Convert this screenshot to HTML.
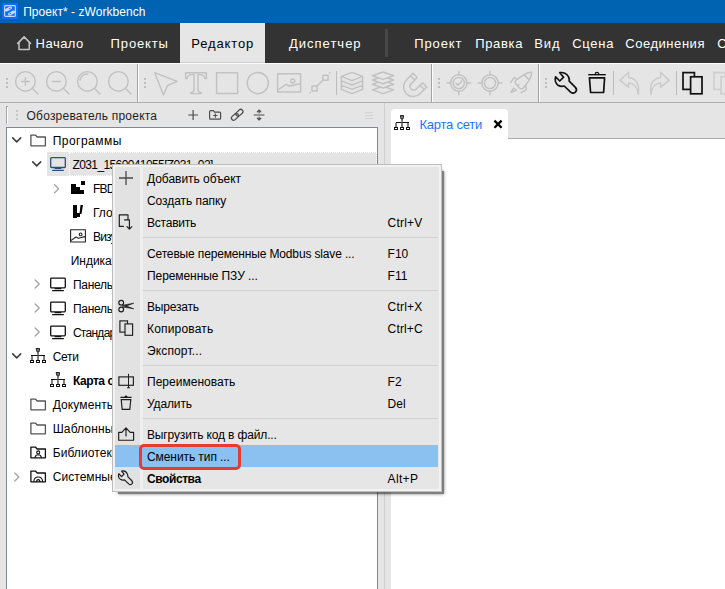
<!DOCTYPE html>
<html><head><meta charset="utf-8">
<style>
*{box-sizing:border-box;margin:0;padding:0}
html,body{width:725px;height:589px;overflow:hidden;background:#e5e5e5;font-family:"Liberation Sans",sans-serif;}
.abs{position:absolute}
.tx{position:absolute;white-space:nowrap}
#title{position:absolute;left:0;top:0;width:725px;height:23px;background:#0063b1}
#menubar{position:absolute;left:0;top:23px;width:725px;height:40px;background:#333}
#acttab{position:absolute;left:180px;top:23px;width:85px;height:40px;background:#e6e6e6;border-bottom:1px solid #cdcdcd}
#toolbar{position:absolute;left:0;top:63px;width:725px;height:40px;background:#e5e5e5;border-top:1px solid #fcfcfc;border-bottom:1px solid #b0b0b0}
#tree{position:absolute;left:6px;top:127px;width:372px;height:480px;background:#fff;border:1px solid #828790}
#ctx{position:absolute;left:112px;top:164px;width:330px;height:328px;background:#e6e6e6;border:1px solid #bdbdbd;box-shadow:inset 0 0 0 2px #f2f2f2}
#ctxshadow{position:absolute;left:118px;top:171px;width:326px;height:323px;background:rgba(0,0,0,0.5);box-shadow:0 0 3px 0 rgba(0,0,0,0.5)}
</style></head><body>
<div id="title"></div>
<svg class="abs" style="left:2px;top:3px" width="16" height="16" viewBox="2 3 16 16"><rect x="2" y="3" width="16" height="16" fill="#0f6cf7"/><rect x="4.600" y="5.600" width="10.800" height="10.800" rx="0.800" fill="none" stroke="#c4d9ff" stroke-width="1.150"/><g fill="#c9dcff"><rect x="4.600" y="7.500" width="7.600" height="3" rx="1.500" transform="rotate(-27 8.400 9)"/><rect x="7.800" y="11.500" width="7.600" height="3" rx="1.500" transform="rotate(-27 11.600 13)"/></g><g fill="#0f6cf7"><ellipse cx="9.800" cy="8.400" rx="1" ry="0.550" transform="rotate(-20 9.800 8.400)"/><ellipse cx="10.200" cy="13.600" rx="1" ry="0.550" transform="rotate(-20 10.200 13.600)"/></g></svg>
<div class="tx" style="left:23.2px;top:3.84px;font-size:12px;line-height:16px;font-weight:400;color:#fff;letter-spacing:0.050px;">Проект* - zWorkbench</div>
<div id="menubar"></div><div id="acttab"></div>
<svg class="abs" style="left:16px;top:35px" width="16" height="16" viewBox="16 35 16 16"><path d="M17.700 43.400L24.100 36.900L30.500 43.400M19 42.600V49.600H29.200V42.600" fill="none" stroke="#c4c4c4" stroke-width="1.500" stroke-linejoin="round" stroke-linecap="round"/></svg>
<div class="tx" style="left:35.6px;top:34.90px;font-size:13px;line-height:17px;font-weight:400;color:#fff;letter-spacing:0.481px;">Начало</div>
<div class="tx" style="left:110.6px;top:34.90px;font-size:13px;line-height:17px;font-weight:400;color:#fff;letter-spacing:0.855px;">Проекты</div>
<div class="tx" style="left:191.2px;top:34.90px;font-size:13px;line-height:17px;font-weight:400;color:#000;letter-spacing:0.876px;">Редактор</div>
<div class="tx" style="left:289.0px;top:34.90px;font-size:13px;line-height:17px;font-weight:400;color:#fff;letter-spacing:1.000px;">Диспетчер</div>
<div class="tx" style="left:414.2px;top:34.90px;font-size:13px;line-height:17px;font-weight:400;color:#fff;letter-spacing:0.894px;">Проект</div>
<div class="tx" style="left:475.2px;top:34.90px;font-size:13px;line-height:17px;font-weight:400;color:#fff;letter-spacing:0.676px;">Правка</div>
<div class="tx" style="left:534.2px;top:34.90px;font-size:13px;line-height:17px;font-weight:400;color:#fff;letter-spacing:1.000px;">Вид</div>
<div class="tx" style="left:572.2px;top:34.90px;font-size:13px;line-height:17px;font-weight:400;color:#fff;letter-spacing:0.743px;">Сцена</div>
<div class="tx" style="left:625.2px;top:34.90px;font-size:13px;line-height:17px;font-weight:400;color:#fff;letter-spacing:0.554px;">Соединения</div>
<div class="tx" style="left:717.2px;top:34.90px;font-size:13px;line-height:17px;font-weight:400;color:#fff;letter-spacing:0.000px;">С</div>
<div class="abs" style="left:385px;top:29px;width:3px;height:28px;background:#474747"></div>
<div id="toolbar"></div>
<svg class="abs" style="left:0;top:63px" width="725" height="40" viewBox="0 63 725 40" fill="none" stroke-linecap="round" stroke-linejoin="round">
<!-- full separators -->
<g shape-rendering="crispEdges" stroke="none">
<rect x="137" y="64" width="1" height="38" fill="#a2a2a2"/><rect x="138" y="63" width="1" height="39" fill="#fdfdfd"/>
<rect x="431" y="64" width="1" height="38" fill="#a2a2a2"/><rect x="432" y="63" width="1" height="39" fill="#fdfdfd"/>
<rect x="538" y="64" width="1" height="38" fill="#a2a2a2"/><rect x="539" y="63" width="1" height="39" fill="#fdfdfd"/>
<!-- grips -->
<g fill="#bdbdbd">
<rect x="6" y="78" width="2" height="2"/><rect x="6" y="82" width="2" height="2"/><rect x="6" y="86" width="2" height="2"/>
<rect x="144" y="78" width="2" height="2"/><rect x="144" y="82" width="2" height="2"/><rect x="144" y="86" width="2" height="2"/>
<rect x="438" y="78" width="2" height="2"/><rect x="438" y="82" width="2" height="2"/><rect x="438" y="86" width="2" height="2"/>
<rect x="545" y="78" width="2" height="2"/><rect x="545" y="82" width="2" height="2"/><rect x="545" y="86" width="2" height="2"/>
</g>
<!-- short separators -->
<rect x="336" y="71" width="1" height="24" fill="#bcbcbc"/>
<rect x="613" y="71" width="1" height="24" fill="#bcbcbc"/>
<rect x="676" y="71" width="1" height="24" fill="#bcbcbc"/>
</g>
<!-- disabled icons -->
<g stroke="#c2c2c2" stroke-width="1.45">
<!-- zoom in -->
<circle cx="25.4" cy="81.4" r="9.8"/><path d="M32.6 88.6L38 94M21.6 81.4H29.2M25.4 77.6V85.2"/>
<!-- zoom out -->
<circle cx="56.4" cy="81.4" r="9.8"/><path d="M63.6 88.6L69 94M52.6 81.4H60.2"/>
<!-- zoom fit -->
<circle cx="87.4" cy="81.4" r="9.8"/><path d="M94.6 88.6L100 94M80 80A7.4 7.4 0 0 1 88 74"/>
<!-- zoom -->
<circle cx="118.4" cy="81.4" r="9.8"/><path d="M125.600 88.6L131 94"/>
<!-- arrow -->
<path d="M154.700 72.600L177.200 81.400L167.600 85.500L163.400 95Z"/>
<!-- T -->
<path d="M185.600 72.800H206.400V78.400H204.800C204.400 76 203.400 74.600 200.600 74.600H198V90C198 91.800 198.800 92.400 201 92.400V93.600H191V92.400C193.200 92.400 194 91.800 194 90V74.600H191.400C188.600 74.600 187.600 76 187.200 78.400H185.600Z"/>
<!-- square -->
<rect x="216.600" y="72.800" width="21" height="20.600"/>
<!-- circle -->
<circle cx="257.800" cy="83.100" r="10.600"/>
<!-- image -->
<rect x="277.600" y="73.800" width="23" height="18.200"/><circle cx="292.700" cy="81" r="2"/><path d="M277.800 90L286.200 84.400L289.400 86L300.400 83.800"/>
<!-- line -->
<rect x="312" y="86" width="5" height="5"/><rect x="323" y="75.200" width="5" height="5"/><path d="M316.800 86.200L323.200 80M310 92.800L310.200 92.600M329.800 73L330 72.800"/>
<!-- stack -->
<path d="M352 72.400L362.600 76.400V89.400L352 93.600L341.400 89.400V76.400ZM341.400 76.400L352 80.600L362.600 76.400M341.400 80.800L352 85L362.600 80.800M341.400 85.200L352 89.400L362.600 85.200"/>
<!-- layers -->
<path fill="#e5e5e5" d="M383 86.2L393.6 89.9L383 93.6L372.4 89.9Z"/><path fill="#e5e5e5" d="M383 80.6L393.6 84.3L383 88.0L372.4 84.3Z"/><path fill="#e5e5e5" d="M383 76.3L393.6 80.0L383 83.7L372.4 80.0Z"/><path fill="#e5e5e5" d="M383 72.0L393.6 75.7L383 79.4L372.4 75.7Z"/>
<!-- magnet -->
<path d="M413 73.200L417.200 77.400L410.800 84A3.700 3.700 0 0 0 416 89.200L422.600 82.800L426.800 87L420 93.800A9.500 9.500 0 0 1 406.400 80ZM410.400 75.800L414.600 80M420.200 85.600L424.200 89.600"/>
<!-- target check -->
<circle cx="458.800" cy="83" r="8.200"/><circle cx="458.800" cy="83" r="5.600"/><path d="M458.800 71.200V74.600M458.800 91.400V94.800M447 83H450.400M467.200 83H470.600M456 83.200L458 85.200L461.800 81"/>
<!-- target -->
<circle cx="490" cy="83" r="8.200"/><circle cx="490" cy="83" r="5.600"/><path d="M490 71.200V74.600M490 91.400V94.800M478.200 83H481.600M498.400 83H501.800"/>
<!-- rocket -->
<path d="M531.700 72.200C528.600 72.400 526 73.200 523.900 74.700L517 79.400C515.400 80.600 514.800 82.200 515.600 83.600L519.600 88C520.800 89.200 522.400 89 523.600 87.800L529.200 80.200C530.800 78 531.600 75.400 531.700 72.200ZM523.900 74.700L529.400 79.900M517.200 79.200L514.100 77.600L510.600 82.600M525.800 85.400L526.200 89.700L521.200 92.700M517.400 86L519 84.400M513.800 88L516.400 90.200L510.900 92.500Z"/>
</g>
<g stroke="#cbcbcb" stroke-width="1.5">
<!-- undo -->
<path d="M628.600 72.200L620 80.400L628.600 87.200V83C634 83.200 637.400 86.800 638.200 94.400C640 84.600 636 78 628.600 77.400Z"/>
<!-- redo -->
<path d="M660.600 72.200L669.200 80.400L660.600 87.200V83C655.200 83.200 651.800 86.800 651 94.400C649.200 84.600 653.200 78 660.600 77.400Z"/>
</g>
<!-- enabled icons -->
<g stroke="#111" stroke-width="1.7">
<!-- wrench -->
<path d="M559.800 72.700C563 72 567 73.500 568.600 77C569.400 78.600 569.400 80 569.200 81.200L575.400 87.400C576.800 89 576.600 91 575.400 92.200C574 93.400 572 93.400 570.600 92.200L564.200 86C562.400 86.600 560 86.400 558 85.200C555.600 83.600 554.600 80 555.600 76.800L559.800 81L563.600 77.200Z"/>
<!-- trash -->
<path d="M588.200 74.700H605.800" stroke-linecap="butt" stroke-width="1.400"/><path d="M595.200 74.200A1.800 1.800 0 0 1 598.800 74.200" stroke-width="1.200"/><path d="M589.400 77.800H604.600L603.600 92.500H590.600Z" stroke-linecap="butt" stroke-width="1.700"/>
<!-- copy -->
<rect x="683" y="72.600" width="11.400" height="16.800" stroke-linejoin="miter"/><rect x="690.600" y="76.800" width="11.400" height="17" stroke-linejoin="miter" fill="#e5e5e5"/>
</g>
<g stroke="#cfcfcf" stroke-width="1.7">
<rect x="714" y="72.600" width="11.400" height="16.800" stroke-linejoin="miter"/><rect x="721" y="76.800" width="11.400" height="17" stroke-linejoin="miter" fill="#e5e5e5"/>
</g>
</svg>

<div class="abs" style="left:6px;top:106px;width:1px;height:18px;background:#a4a4a4"></div><div class="abs" style="left:7px;top:106px;width:1px;height:1px;background:#a4a4a4"></div><div class="abs" style="left:7px;top:107px;width:1px;height:17px;background:#fff"></div>
<svg class="abs" style="left:0;top:104px" width="385" height="23" viewBox="0 104 385 23" fill="none" stroke-linecap="round" stroke-linejoin="round">
<g fill="#c6c6c6" stroke="none" shape-rendering="crispEdges"><rect x="16" y="110" width="2" height="2"/><rect x="16" y="114" width="2" height="2"/><rect x="16" y="118" width="2" height="2"/></g>
<g stroke="#4d4d4d" stroke-width="1.200">
<path d="M188.300 115H198M193.100 110.100V119.900" stroke-linecap="butt"/>
<path d="M210.600 110.700H213.400L214.600 112.200H219.600A1 1 0 0 1 220.600 113.200V118.200A1 1 0 0 1 219.600 119.200H210.600A1 1 0 0 1 209.600 118.200V111.700A1 1 0 0 1 210.600 110.700Z"/><path d="M213.600 115.500H217M215.300 113.800V117.200" stroke-width="1.100"/>
<g transform="rotate(-42 237.200 114.800)"><rect x="236.200" y="112.600" width="8" height="4.400" rx="2.200"/><rect x="230.200" y="112.600" width="8" height="4.400" rx="2.200"/></g>
<path d="M254.200 115H264M259.100 110.200V113M259.100 117V119.800M257.300 111.800L259.100 110L260.900 111.800M257.300 118.200L259.100 120L260.900 118.200" stroke-width="1.150"/>
</g>
<g stroke="#d2d2d2" stroke-width="1" shape-rendering="crispEdges"><path d="M365 112.500H373M365 115.500H373M365 118.500H373"/></g>
</svg>

<div class="tx" style="left:26.5px;top:107.64px;font-size:12px;line-height:16px;font-weight:400;color:#1e1e1e;letter-spacing:0.215px;">Обозреватель проекта</div>
<div id="tree"></div>
<div class="abs" style="left:47px;top:152px;width:22px;height:24px;background:#e4e4e4"></div>
<div class="abs" style="left:69px;top:152px;width:308px;height:24px;background:#e4e4e4;border:1px dotted #fff"></div>
<div class="tx" style="left:52.7px;top:132.84px;font-size:12px;line-height:16px;font-weight:400;color:#000;letter-spacing:0.471px;">Программы</div>
<div class="tx" style="left:72.5px;top:156.84px;font-size:12px;line-height:16px;font-weight:400;color:#000;letter-spacing:-0.609px;">Z031_1560041055[Z031_02]</div>
<div class="tx" style="left:92.9px;top:180.84px;font-size:12px;line-height:16px;font-weight:400;color:#000;letter-spacing:-0.750px;">FBD</div>
<div class="tx" style="left:92.9px;top:204.84px;font-size:12px;line-height:16px;font-weight:400;color:#000;letter-spacing:0.024px;">Глобальные</div>
<div class="tx" style="left:92.9px;top:228.84px;font-size:12px;line-height:16px;font-weight:400;color:#000;letter-spacing:-0.750px;">Визуализация</div>
<div class="tx" style="left:70.8px;top:252.84px;font-size:12px;line-height:16px;font-weight:400;color:#000;letter-spacing:-0.047px;">Индикаторы</div>
<div class="tx" style="left:72.9px;top:276.84px;font-size:12px;line-height:16px;font-weight:400;color:#000;letter-spacing:-0.254px;">Панель</div>
<div class="tx" style="left:72.9px;top:300.84px;font-size:12px;line-height:16px;font-weight:400;color:#000;letter-spacing:-0.254px;">Панель</div>
<div class="tx" style="left:72.9px;top:324.84px;font-size:12px;line-height:16px;font-weight:400;color:#000;letter-spacing:-0.712px;">Стандартные</div>
<div class="tx" style="left:52.7px;top:348.84px;font-size:12px;line-height:16px;font-weight:400;color:#000;letter-spacing:-0.280px;">Сети</div>
<div class="tx" style="left:72.9px;top:372.84px;font-size:12px;line-height:16px;font-weight:700;color:#000;letter-spacing:-0.439px;">Карта сети</div>
<div class="tx" style="left:52.7px;top:396.84px;font-size:12px;line-height:16px;font-weight:400;color:#000;letter-spacing:0.115px;">Документы</div>
<div class="tx" style="left:52.7px;top:420.84px;font-size:12px;line-height:16px;font-weight:400;color:#000;letter-spacing:0.133px;">Шаблонны</div>
<div class="tx" style="left:52.7px;top:444.84px;font-size:12px;line-height:16px;font-weight:400;color:#000;letter-spacing:0.081px;">Библиотеки</div>
<div class="tx" style="left:52.7px;top:468.84px;font-size:12px;line-height:16px;font-weight:400;color:#000;letter-spacing:0.052px;">Системные</div>
<svg class="abs" style="left:7px;top:128px" width="106" height="360" viewBox="7 128 106 360" fill="none" stroke-linecap="round" stroke-linejoin="round">
<defs>
<g id="chevD"><path d="M0.300 0.300L4.300 4.300L8.300 0.300" stroke="#3c3c3c" stroke-width="1.500"/></g>
<g id="chevR"><path d="M0.200 0.200L4.200 4.200L0.200 8.200" stroke="#a6a6a6" stroke-width="1.400"/></g>
<g id="folder"><path d="M0.700 0.700H5.400L7 2.500H15.200V11.300H0.700Z" stroke="#555" stroke-width="1.300"/></g>
<g id="mon"><rect x="0.700" y="0.700" width="14.600" height="9.800" rx="0.800" stroke-width="1.300"/><path d="M5.200 11.300H10.800M2.600 13.300H13.400" stroke-width="1.200"/></g>
<g id="net"><g shape-rendering="crispEdges" stroke="#111" stroke-width="1"><rect x="0.500" y="12.500" width="3" height="2"/><rect x="6.500" y="12.500" width="3" height="2"/><rect x="12.500" y="12.500" width="3" height="2"/><path d="M1.500 7.500H14.500"/></g><g stroke="#555" stroke-width="1.500" stroke-linecap="butt"><path d="M2 8V12M8 3.500V12M14 8V12"/></g><path d="M6.500 0.500H9.500V2.500A1.500 1.500 0 0 1 6.500 2.500Z" stroke="#222" stroke-width="1" fill="#777"/></g>
</defs>
<use href="#chevD" x="12.400" y="137.600"/>
<use href="#folder" x="30.200" y="134.500"/>
<use href="#chevD" x="32.400" y="161.600"/>
<g stroke="#2f4d7c"><use href="#mon" x="50" y="157"/></g>
<use href="#chevR" x="54.400" y="184.600"/>
<!-- FBD -->
<g fill="#000" stroke="none" shape-rendering="crispEdges"><rect x="71" y="184" width="5" height="10"/><rect x="76" y="187" width="4" height="7"/><rect x="80" y="190" width="4" height="4"/><rect x="81" y="181" width="4" height="4"/></g>
<!-- Glob -->
<g fill="#000" stroke="none"><path d="M73 205H77V218H73ZM77 213H80V217H77ZM80.500 205H83L81.500 214H79.500Z"/></g>
<!-- Viz -->
<g stroke="#222" stroke-width="1.100"><rect x="70.600" y="229.800" width="14.800" height="12.200"/><circle cx="80.600" cy="234.400" r="1.400"/><path d="M70.800 240.600L76 237L78.400 238.200L85 236.600"/></g>
<use href="#chevR" x="35" y="279.800"/>
<g stroke="#111"><use href="#mon" x="50" y="277.400"/></g>
<use href="#chevR" x="35" y="303.800"/>
<g stroke="#111"><use href="#mon" x="50" y="301.400"/></g>
<use href="#chevR" x="35" y="327.800"/>
<g stroke="#111"><use href="#mon" x="50" y="325.400"/></g>
<use href="#chevD" x="12.400" y="353.600"/>
<use href="#net" x="30" y="348"/>
<use href="#net" x="50" y="372"/>
<use href="#folder" x="30.200" y="398.500"/>
<use href="#folder" x="30.200" y="422.500"/>
<g><path d="M30.900 447.200H35.600L37.200 449H45.400V457.800H30.900Z" stroke="#111" stroke-width="1.300"/><circle cx="38.200" cy="452.400" r="1.500" stroke="#111" stroke-width="1.100"/><path d="M35 457.600C35.400 455.600 36.600 454.800 38.200 454.800C39.800 454.800 41 455.600 41.400 457.600" stroke="#111" stroke-width="1.100"/></g>
<use href="#chevR" x="14.600" y="472.800"/>
<g><path d="M30.900 471.200H35.600L37.200 473H45.400V481.800H30.900Z" stroke="#111" stroke-width="1.300"/><path d="M33.800 481.600C34 478.400 36 477 38.200 477C40.400 477 42.400 478.400 42.600 481.600M36.400 481.600C36.600 480.200 37.400 479.600 38.200 479.600C39 479.600 39.800 480.200 40 481.600" stroke="#111" stroke-width="1.100"/></g>
</svg>

<div class="abs" style="left:384px;top:103px;width:1px;height:490px;background:#cfcfcf"></div>
<div class="abs" style="left:391px;top:138px;width:340px;height:1px;background:#ababab"></div>
<div class="abs" style="left:391px;top:139px;width:340px;height:460px;background:#fff"></div>
<div class="abs" style="left:391px;top:109px;width:117px;height:31px;background:#fff;border-radius:4px 4px 0 0"></div>
<svg class="abs" style="left:391px;top:109px" width="117" height="31" viewBox="391 109 117 31" fill="none">
<g transform="translate(394 115)"><g shape-rendering="crispEdges" stroke="#111" stroke-width="1"><rect x="0.500" y="12.500" width="3" height="2"/><rect x="6.500" y="12.500" width="3" height="2"/><rect x="12.500" y="12.500" width="3" height="2"/><path d="M1.500 7.500H14.500"/></g><g stroke="#555" stroke-width="1.500"><path d="M2 8V12M8 3.500V12M14 8V12"/></g><path d="M6.500 0.500H9.500V2.500A1.500 1.500 0 0 1 6.500 2.500Z" stroke="#222" stroke-width="1" fill="#777"/></g>
<path d="M494.400 120.600L501.600 127.800M501.600 120.600L494.400 127.800" stroke="#000" stroke-width="2.300"/>
</svg>

<div class="tx" style="left:419.5px;top:116.10px;font-size:13px;line-height:17px;font-weight:400;color:#1c74fb;letter-spacing:-0.236px;">Карта сети</div>
<div id="ctxshadow"></div><div id="ctx"></div>
<div class="abs" style="left:115px;top:167px;width:25px;height:322px;background:#e2e2e2"></div>
<div class="abs" style="left:140px;top:167px;width:3px;height:322px;background:#eeeeee"></div>
<div class="abs" style="left:115px;top:445px;width:323px;height:22px;background:#8bc1f0"></div>
<div class="tx" style="left:147.0px;top:170.84px;font-size:12px;line-height:16px;font-weight:400;color:#000;letter-spacing:-0.034px;">Добавить объект</div>
<div class="tx" style="left:147.0px;top:192.84px;font-size:12px;line-height:16px;font-weight:400;color:#000;letter-spacing:-0.058px;">Создать папку</div>
<div class="tx" style="left:147.0px;top:214.84px;font-size:12px;line-height:16px;font-weight:400;color:#000;letter-spacing:-0.225px;">Вставить</div>
<div class="tx" style="left:387.6px;top:214.84px;font-size:12px;line-height:16px;font-weight:400;color:#000;letter-spacing:0.202px;">Ctrl+V</div>
<div class="tx" style="left:147.0px;top:245.84px;font-size:12px;line-height:16px;font-weight:400;color:#000;letter-spacing:-0.150px;">Сетевые переменные Modbus slave ...</div>
<div class="tx" style="left:387.6px;top:245.84px;font-size:12px;line-height:16px;font-weight:400;color:#000;letter-spacing:0.000px;">F10</div>
<div class="tx" style="left:147.0px;top:267.84px;font-size:12px;line-height:16px;font-weight:400;color:#000;letter-spacing:-0.080px;">Переменные ПЗУ ...</div>
<div class="tx" style="left:387.6px;top:267.84px;font-size:12px;line-height:16px;font-weight:400;color:#000;letter-spacing:0.000px;">F11</div>
<div class="tx" style="left:147.0px;top:298.84px;font-size:12px;line-height:16px;font-weight:400;color:#000;letter-spacing:-0.196px;">Вырезать</div>
<div class="tx" style="left:387.6px;top:298.84px;font-size:12px;line-height:16px;font-weight:400;color:#000;letter-spacing:0.202px;">Ctrl+X</div>
<div class="tx" style="left:147.0px;top:320.84px;font-size:12px;line-height:16px;font-weight:400;color:#000;letter-spacing:0.186px;">Копировать</div>
<div class="tx" style="left:387.6px;top:320.84px;font-size:12px;line-height:16px;font-weight:400;color:#000;letter-spacing:0.151px;">Ctrl+C</div>
<div class="tx" style="left:147.0px;top:342.84px;font-size:12px;line-height:16px;font-weight:400;color:#000;letter-spacing:0.137px;">Экспорт...</div>
<div class="tx" style="left:147.0px;top:373.84px;font-size:12px;line-height:16px;font-weight:400;color:#000;letter-spacing:0.026px;">Переименовать</div>
<div class="tx" style="left:387.6px;top:373.84px;font-size:12px;line-height:16px;font-weight:400;color:#000;letter-spacing:0.000px;">F2</div>
<div class="tx" style="left:147.0px;top:395.84px;font-size:12px;line-height:16px;font-weight:400;color:#000;letter-spacing:-0.138px;">Удалить</div>
<div class="tx" style="left:387.6px;top:395.84px;font-size:12px;line-height:16px;font-weight:400;color:#000;letter-spacing:0.000px;">Del</div>
<div class="tx" style="left:147.0px;top:426.84px;font-size:12px;line-height:16px;font-weight:400;color:#000;letter-spacing:-0.138px;">Выгрузить код в файл...</div>
<div class="tx" style="left:147.0px;top:448.84px;font-size:12px;line-height:16px;font-weight:400;color:#000;letter-spacing:-0.082px;">Сменить тип ...</div>
<div class="tx" style="left:147.0px;top:470.84px;font-size:12px;line-height:16px;font-weight:700;color:#000;letter-spacing:-0.421px;">Свойства</div>
<div class="tx" style="left:387.6px;top:470.84px;font-size:12px;line-height:16px;font-weight:400;color:#000;letter-spacing:0.321px;">Alt+P</div>
<div class="abs" style="left:143px;top:237px;width:295px;height:1px;background:#d1d1d1"></div>
<div class="abs" style="left:143px;top:290px;width:295px;height:1px;background:#d1d1d1"></div>
<div class="abs" style="left:143px;top:365px;width:295px;height:1px;background:#d1d1d1"></div>
<div class="abs" style="left:143px;top:418px;width:295px;height:1px;background:#d1d1d1"></div>
<div class="abs" style="left:139px;top:444px;width:102px;height:26px;border:3px solid #e53b30;border-radius:5px"></div>
<svg class="abs" style="left:116px;top:167px" width="24" height="322" viewBox="116 167 24 322" fill="none" stroke-linecap="round" stroke-linejoin="round">
<g stroke="#484848" stroke-width="1.300"><path d="M119 178H133M126 171V185" stroke-linecap="butt"/></g>
<g stroke="#1c1c1c" stroke-width="1.150">
<!-- paste -->
<path d="M128 219.600V214.900H119.300V226.400H123.400M124.600 219.900H129.400V228.600M127 226.700L129.400 229.100L131.800 226.700"/>
<!-- cut -->
<circle cx="121.200" cy="302.700" r="2.400"/><circle cx="121.200" cy="309.500" r="2.400"/>
<path d="M122.600 305.200L133.800 303.200L126.400 306.100ZM122.600 307L133.800 308.800L126.400 306.100Z" fill="#1c1c1c" stroke-width="0.600"/>
<!-- copy -->
<rect x="119.900" y="320.900" width="7.600" height="11.200" stroke-linejoin="miter"/><rect x="125" y="323.900" width="7.600" height="11.400" fill="#e2e2e2" stroke-linejoin="miter"/>
<!-- rename -->
<rect x="118.900" y="376.900" width="14.500" height="8.400" stroke-linejoin="miter"/><path d="M128.500 374.200V387.600M127.400 387.800H129.600" stroke-width="1"/>
<!-- delete -->
<path d="M120.400 397.400H131.600M124.800 397L126 395.800L127.200 397" stroke-linecap="butt"/><path d="M121.200 399.600H130.800L129.800 409.400H122.200Z" stroke-linejoin="miter" stroke-linecap="butt"/>
<!-- upload -->
<path d="M118.700 432.400H121.800L126 427.900L130.200 432.400H133.600V440.200H118.700ZM126 428.400V436"/>
<!-- wrench -->
<path transform="translate(118.400 470.600) scale(0.660) translate(-555 -72)" stroke-width="1.750" d="M559.800 72.700C563 72 567 73.500 568.600 77C569.400 78.600 569.400 80 569.200 81.200L575.400 87.400C576.800 89 576.600 91 575.400 92.200C574 93.400 572 93.400 570.600 92.200L564.200 86C562.400 86.600 560 86.400 558 85.200C555.600 83.600 554.600 80 555.600 76.800L559.800 81L563.600 77.200Z"/>
</g>
</svg>

</body></html>
